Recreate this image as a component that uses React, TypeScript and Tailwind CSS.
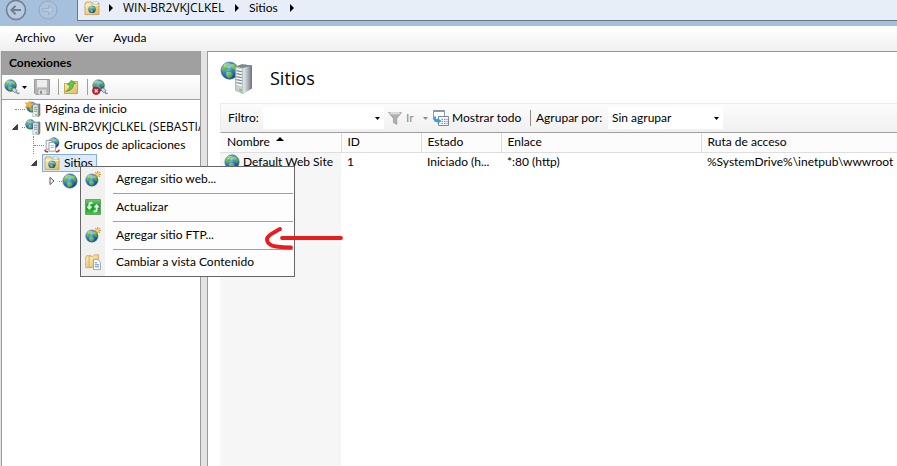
import React from "react";

type IconProps = { className?: string };

function Gradients() {
  return (
    <svg className="absolute h-0 w-0" aria-hidden="true">
      <defs>
        <radialGradient id="sea" cx="0.35" cy="0.3" r="0.8">
          <stop offset="0" stopColor="#a8d4f6" />
          <stop offset="0.4" stopColor="#3f86d6" />
          <stop offset="1" stopColor="#0c2f86" />
        </radialGradient>
        <linearGradient id="land" x1="0" y1="0" x2="1" y2="1">
          <stop offset="0" stopColor="#a5e36a" />
          <stop offset="1" stopColor="#1f8a2c" />
        </linearGradient>
        <linearGradient id="steel" x1="0" y1="0" x2="1" y2="0">
          <stop offset="0" stopColor="#e9eef0" />
          <stop offset="0.45" stopColor="#b4bdc2" />
          <stop offset="1" stopColor="#6b7378" />
        </linearGradient>
        <linearGradient id="manila" x1="0" y1="0" x2="1" y2="1">
          <stop offset="0" stopColor="#fdf0bd" />
          <stop offset="1" stopColor="#e4b95e" />
        </linearGradient>
        <linearGradient id="leaf" x1="0" y1="0" x2="0" y2="1">
          <stop offset="0" stopColor="#6fce6d" />
          <stop offset="0.5" stopColor="#0e9a20" />
          <stop offset="1" stopColor="#3fd03c" />
        </linearGradient>
      </defs>
    </svg>
  );
}

function GlobeShape() {
  return (
    <g>
      <circle cx="8" cy="8" r="7.2" fill="url(#sea)" stroke="#5573a8" strokeWidth="0.6" />
      <path d="M1.6 5.6 4 2.6 7.6 1.4 8.6 3 7 4.6 6.8 6.6 4.4 7.2 4.6 9 2 8.6Z" fill="url(#land)" />
      <path d="M9.6 2.6 12.6 3 14.6 6.4 14.4 9.6 12.2 9 11.6 6.8 9.6 6Z" fill="url(#land)" />
      <path d="M5.4 9.4 8.6 9 10.8 11 9.6 13.6 7.2 14.6 5.2 12.4Z" fill="url(#land)" />
      <ellipse cx="6.4" cy="3.8" rx="3.6" ry="2" fill="#fff" opacity="0.3" />
    </g>
  );
}

function Globe({ className = "size-4 shrink-0" }: IconProps) {
  return (
    <svg viewBox="0 0 16 16" className={className} aria-hidden="true">
      <GlobeShape />
    </svg>
  );
}

function GlobeNew() {
  return (
    <svg viewBox="0 0 16 16" className="size-4 shrink-0" aria-hidden="true">
      <g transform="translate(0 2.2) scale(0.86)">
        <GlobeShape />
      </g>
      <path d="M12.6 0v7M9.1 3.5h7M10.2 1.1l4.8 4.8M15 1.1l-4.8 4.8" stroke="#ee9a26" strokeWidth="1.1" />
      <circle cx="12.6" cy="3.5" r="1.3" fill="#ffe08a" />
    </svg>
  );
}

function GlobePlug() {
  return (
    <svg viewBox="0 0 16 16" className="size-4 shrink-0" aria-hidden="true">
      <g transform="scale(0.82)">
        <GlobeShape />
      </g>
      <path d="M7.8 10.8 10 8.6l3.2 3-2.4 2.2Z" fill="#cfd9e2" stroke="#63717f" strokeWidth="0.8" />
      <path d="m12.2 12.8 1.4 1.8 2-.4" stroke="#7d8994" strokeWidth="1.2" fill="none" />
    </svg>
  );
}

function GlobeRemove() {
  return (
    <svg viewBox="0 0 16 16" className="size-4 shrink-0" aria-hidden="true">
      <g transform="scale(0.82)">
        <GlobeShape />
      </g>
      <path d="M8.8 10.8 11 8.6l3.2 3-2.4 2.2Z" fill="#cfd9e2" stroke="#63717f" strokeWidth="0.8" />
      <path d="m12.8 12.8 1.2 1.8 1.8-.4" stroke="#7d8994" strokeWidth="1.2" fill="none" />
      <circle cx="4.2" cy="11.8" r="3.8" fill="#cf1f25" stroke="#8d1216" strokeWidth="0.6" />
      <path d="m2.7 10.3 3 3M5.7 10.3l-3 3" stroke="#fff" strokeWidth="1.2" />
    </svg>
  );
}

function Tower() {
  return (
    <g>
      <path d="M8 4.4 10.4 3H15v11.4L12.8 16H8Z" fill="url(#steel)" stroke="#727b80" strokeWidth="0.6" />
      <path d="M8.2 4.5h4.4V15.7H8.2Z" fill="#e7ecee" />
      <path d="M9 6.3h3M9 8.3h3M9 10.3h3" stroke="#75818a" strokeWidth="0.8" />
      <path d="M10.2 13.2h1.8v1.2h-1.8Z" fill="#52c234" />
    </g>
  );
}

function ServerIcon() {
  return (
    <svg viewBox="0 0 16 16" className="size-4 shrink-0" aria-hidden="true">
      <g transform="scale(0.68)">
        <GlobeShape />
      </g>
      <Tower />
    </svg>
  );
}

function StartIcon() {
  return (
    <svg viewBox="0 0 16 16" className="size-4 shrink-0" aria-hidden="true">
      <g transform="translate(1 0.4) scale(0.72)">
        <GlobeShape />
      </g>
      <Tower />
      <path d="m0 1.4 3 .6L4.6 0l1 2.4L8.4 3 6 4.8 5.6 7.6 3.4 5.8.4 6.4 1.8 3.8Z" fill="#f7b52e" stroke="#dd8a14" strokeWidth="0.4" />
    </svg>
  );
}

function BigServer() {
  return (
    <svg viewBox="0 0 34 34" className="size-[34px]" aria-hidden="true">
      <g transform="scale(1.2)">
        <GlobeShape />
      </g>
      <path d="M15.5 5.5 22 3.2l10 1.4v22.6l-8.8 5.2-7.7-3.2Z" fill="url(#steel)" />
      <path d="m15.5 5.5 7.7 1.3v25.6l-7.7-3.2Z" fill="#c9d1d5" stroke="#7d868b" strokeWidth="0.5" />
      <path d="M23.2 6.8 32 4.6v22.6l-8.8 5.2Z" fill="url(#steel)" />
      <path d="m15.5 5.5 6.5-2.3 10 1.4-8.8 2.2Z" fill="#7b858a" />
      <path d="m16.5 8.2 5.6 1M16.5 11.2l5.6 1M16.5 14.2l5.6 1M16.5 17.2l5.6 1M16.5 20.2l5.6 1M16.5 23.2l5.6 1.2" stroke="#fff" strokeWidth="1.3" />
      <path d="m16.5 9.7 5.6 1M16.5 12.7l5.6 1M16.5 15.7l5.6 1M16.5 18.7l5.6 1M16.5 21.7l5.6 1" stroke="#6c767d" strokeWidth="0.8" />
      <path d="m19.4 27.4 2.4.8v2.2l-2.4-.8Z" fill="#79d03c" />
    </svg>
  );
}

function SiteFolder() {
  return (
    <svg viewBox="0 0 16 16" className="size-4 shrink-0" aria-hidden="true">
      <path d="M1 3.4h1V2h5l1 1.4h7v11.2H1Z" fill="url(#manila)" stroke="#c79a45" strokeWidth="0.8" />
      <path d="M9 2h5v2.2H9Z" fill="#fff" stroke="#8fb3d1" strokeWidth="0.6" />
      <path d="M1.4 5.4h13.2" stroke="#fff6d5" strokeWidth="0.8" />
      <g transform="translate(4 5.4) scale(0.5)">
        <GlobeShape />
      </g>
    </svg>
  );
}

function AppPools() {
  return (
    <svg viewBox="0 0 16 16" className="size-4 shrink-0" aria-hidden="true">
      <g transform="translate(3.8 0) scale(0.74)">
        <GlobeShape />
      </g>
      <path d="M2.2 3.4h6v8.8h-6Z" fill="#f6f9fb" stroke="#7e8c98" strokeWidth="0.8" />
      <path d="M5 5.4h4.4l2 2v6.8H5Z" fill="#fff" stroke="#7e8c98" strokeWidth="0.8" />
      <path d="M6.6 8.6h3.2M6.6 10.4h3.2" stroke="#8fa3b3" strokeWidth="0.8" />
      <path d="M.8 12.6q.4 2.2 3.4 2.2M15.2 12.6q-.4 2.200-3.400 2.200" stroke="#c9342d" strokeWidth="1.6" fill="none" />
    </svg>
  );
}

function SaveIcon() {
  return (
    <svg viewBox="0 0 16 16" className="size-4 shrink-0" aria-hidden="true">
      <path d="M.5.5h15v15H2L.5 14Z" fill="#b4b4b4" stroke="#9a9a9a" />
      <path d="M3 1h10v7.4H3Z" fill="#ededed" />
      <path d="M4.4 10.6h8v5h-8Z" fill="#dcdcdc" />
      <path d="M6 11.8h2v3H6Z" fill="#8c8c8c" />
    </svg>
  );
}

function UpFolder() {
  return (
    <svg viewBox="0 0 16 16" className="size-4 shrink-0" aria-hidden="true">
      <path d="M1.5 4.5h7l1.4-2h4.6v12h-13Z" fill="url(#manila)" stroke="#c79a45" strokeWidth="0.9" />
      <path d="M2.6 12.4C6 10.8 6.8 8 6.6 5.8H4.4L8.4 1.2l4.4 3.4-2.2.6C10.4 9 8 12.2 2.6 12.4Z" fill="#63c540" stroke="#3b8f27" strokeWidth="0.6" />
    </svg>
  );
}

function RefreshIcon() {
  return (
    <svg viewBox="0 0 16 16" className="size-4 shrink-0" aria-hidden="true">
      <path d="M.5.5h15v15H.5Z" fill="url(#leaf)" stroke="#6fa06e" />
      <path d="M7.4 3.8H5.6Q4.4 3.8 4.4 5v3" stroke="#fff" strokeWidth="1.8" fill="none" />
      <path d="M1.4 7.4h6L4.4 11Z" fill="#fff" />
      <path d="M8.6 12.4h1.8q1.2 0 1.2-1.2v-3" stroke="#fff" strokeWidth="1.8" fill="none" />
      <path d="M8.6 8.6h6L11.6 5Z" fill="#fff" />
    </svg>
  );
}

function ContentIcon() {
  return (
    <svg viewBox="0 0 16 16" className="size-4 shrink-0" aria-hidden="true">
      <path d="M.6 3h1V1.6h4L6.6 3v10.6h-6Z" fill="url(#manila)" stroke="#c4a059" strokeWidth="0.7" />
      <path d="M4.2 4V2.2h4L9.4.8h4.2v11l-9.4 2Z" fill="url(#manila)" stroke="#c4a059" strokeWidth="0.7" />
      <path d="M8.4 5.6h4.4l2.6 2.6v7.4h-7Z" fill="#fff" stroke="#7b94ab" strokeWidth="0.8" />
      <path d="M9.8 8.8h2.4M9.8 10.8H14M9.8 12.8H14" stroke="#4f7fb5" strokeWidth="0.9" />
    </svg>
  );
}

function FunnelIcon() {
  return (
    <svg viewBox="0 0 14 14" className="size-3.5 shrink-0" aria-hidden="true">
      <path d="M.5 1.6h13L8.8 7.4v6l-3.4-1.8V7.4Z" fill="#b0b0b0" stroke="#989898" strokeWidth="0.7" />
      <ellipse cx="7" cy="2.2" rx="5.4" ry="1.2" fill="#dcdcdc" />
    </svg>
  );
}

function ShowAllIcon() {
  return (
    <svg viewBox="0 0 16 16" className="size-4 shrink-0" aria-hidden="true">
      <path d="M.5.5h11v9H.5Z" fill="#fff" stroke="#8b98a3" />
      <path d="M.5 1.2h11" stroke="#8b98a3" strokeWidth="1.6" />
      <path d="M5.5 6.5h10v9h-10Z" fill="#f4f8fb" stroke="#7b8994" />
      <path d="M8.6 9.4h6M8.600 11.400h6M8.600 13.400h6" stroke="#6e8ba3" strokeDasharray="1.4 1" />
      <path d="M1 6.6v3.6q0 1.8 1.8 1.8h1.8V14l4-3-4-3v1.8H3V6.6Z" fill="#3e9bdc" />
    </svg>
  );
}

function Down({ className = "text-black" }: IconProps) {
  return (
    <svg viewBox="0 0 5 3" className={`h-[3px] w-[5px] shrink-0 ${className}`} aria-hidden="true">
      <path d="M0 0h5L2.5 3Z" fill="currentColor" />
    </svg>
  );
}

function Crumb() {
  return (
    <svg viewBox="0 0 4 8" className="h-2 w-1 shrink-0" aria-hidden="true">
      <path d="M0 0 4 4 0 8Z" fill="#000" />
    </svg>
  );
}

function Open() {
  return (
    <svg viewBox="0 0 6 6" className="size-1.5 shrink-0" aria-label="Contraer">
      <path d="M5.5.5v5h-5Z" fill="#444" stroke="#222" strokeWidth="0.8" />
    </svg>
  );
}

function Closed() {
  return (
    <svg viewBox="0 0 6 10" className="h-2.5 w-1.5 shrink-0" aria-label="Expandir">
      <path d="M1 1.4 5 5 1 8.6Z" fill="#fff" stroke="#555" />
    </svg>
  );
}

function Branch({ className = "w-1" }: IconProps) {
  return <span className={`h-0 shrink-0 border-t border-dotted border-[#888] ${className}`} />;
}

function TopBar() {
  return (
    <header className="flex h-[26px] shrink-0 items-start bg-[#a6bfdd]">
      <div className="flex h-5 w-[77px] shrink-0 items-center gap-2.5 pl-[5px]">
        <button aria-label="Atrás" className="text-[#737f8e]">
          <svg viewBox="0 0 22 22" className="size-[22px]">
            <circle cx="11" cy="11" r="9.5" fill="#b8cae0" stroke="currentColor" strokeWidth="1.6" />
            <path d="M16 11H6.6M10.6 6.8 6.4 11l4.2 4.2" fill="none" stroke="currentColor" strokeWidth="2" />
          </svg>
        </button>
        <button aria-label="Adelante" className="text-[#92a7c2]">
          <svg viewBox="0 0 22 22" className="size-[22px]">
            <circle cx="11" cy="11" r="9" fill="#adc4df" stroke="currentColor" />
            <path d="M5.6 9.6h6V6.4l5 4.6-5 4.6v-3.2h-6Z" fill="#b9cce3" stroke="currentColor" strokeWidth="0.8" />
          </svg>
        </button>
      </div>
      <nav aria-label="Ruta" className="flex h-[21px] flex-1 items-center border-b border-l border-[#6c7886] bg-[#e7eef7] pb-1 pl-1.5">
        <SiteFolder />
        <span className="w-[9px]" />
        <Crumb />
        <button className="ml-[10px] w-28 text-left font-['Open_Sans','Noto_Sans',sans-serif]">WIN-BR2VKJCLKEL</button>
        <Crumb />
        <button className="ml-[10px] w-[41px] text-left">Sitios</button>
        <Crumb />
      </nav>
    </header>
  );
}

function Connections() {
  return (
    <aside className="flex w-[200px] shrink-0 flex-col border-x border-[#999] bg-white">
      <h2 className="flex h-6 shrink-0 items-center bg-[#a0a0a0] pl-[7px] font-bold">Conexiones</h2>
      <div role="toolbar" aria-label="Conexiones" className="flex h-[25px] shrink-0 items-center border-b border-[#a0a0a0] bg-gradient-to-b from-white to-[#f0f0f0] pl-0.5">
        <button aria-label="Conectar" className="flex items-center gap-0.5">
          <GlobePlug />
          <Down />
        </button>
        <button aria-label="Guardar" className="ml-[7px]"><SaveIcon /></button>
        <span className="ml-2 h-4 w-px bg-[#a0a0a0]" />
        <button aria-label="Subir" className="ml-1"><UpFolder /></button>
        <span className="ml-2 h-4 w-px bg-[#a0a0a0]" />
        <button aria-label="Quitar conexión" className="ml-1"><GlobeRemove /></button>
      </div>
      <ul role="tree" className="overflow-hidden pl-px leading-[18px] whitespace-nowrap *:flex *:h-[18px] *:items-center">
        <li role="treeitem" className="pl-3">
          <Branch className="w-2.5" />
          <StartIcon />
          <span className="ml-1">Página de inicio</span>
        </li>
        <li role="treeitem" aria-expanded="true" className="pl-[9px]">
          <Open />
          <span className="w-1 shrink-0" />
          <Branch className="w-[3px]" />
          <ServerIcon />
          <span className="ml-1 font-['Open_Sans','Noto_Sans',sans-serif]">WIN-BR2VKJCLKEL (SEBASTIA</span>
        </li>
        <li role="treeitem" className="pl-[30px]">
          <span className="h-full w-0 shrink-0 border-l border-dotted border-[#888]" />
          <Branch className="w-2.5" />
          <AppPools />
          <span className="ml-1">Grupos de aplicaciones</span>
        </li>
        <li role="treeitem" aria-expanded="true" aria-selected="true" className="pl-7">
          <Open />
          <span className="w-[5px] shrink-0" />
          <span className="flex h-[18px] items-center border border-[#84acdd] bg-[#dceafc] pr-[3px] pl-px">
            <SiteFolder />
            <span className="ml-1">Sitios</span>
          </span>
        </li>
        <li role="treeitem" aria-expanded="false" aria-label="Default Web Site" className="pl-[46px]">
          <Closed />
          <span className="w-1 shrink-0" />
          <Branch className="w-[3px]" />
          <Globe />
        </li>
      </ul>
    </aside>
  );
}

function FilterBar() {
  return (
    <div role="toolbar" aria-label="Filtro" className="flex h-[30px] shrink-0 items-center border-t border-l border-b border-t-[#ececec] border-b-[#a0a0a0] border-l-[#ececec] bg-gradient-to-b from-[#fcfcfc] to-[#f0f0f0] pl-[7px] whitespace-nowrap">
      <label htmlFor="filter" className="w-[35px]">Filtro:</label>
      <div className="flex h-[22px] w-[121px] items-center bg-white pr-1">
        <input id="filter" className="w-full min-w-0 bg-transparent outline-none" />
        <button aria-label="Mostrar filtros"><Down /></button>
      </div>
      <button disabled className="ml-1 flex w-[35px] items-center gap-1 text-[#8d8d8d]">
        <FunnelIcon />
        Ir
      </button>
      <button disabled aria-label="Opciones de búsqueda"><Down className="text-[#8d8d8d]" /></button>
      <button className="ml-[5px] flex w-[97px] items-center gap-[3px]">
        <ShowAllIcon />
        Mostrar todo
      </button>
      <span className="h-4 w-px bg-[#8d8d8d]" />
      <label htmlFor="group" className="ml-[5px] w-[72px]">Agrupar por:</label>
      <span className="flex h-[22px] w-[115px] items-center bg-white pr-1 pl-1">
        <select id="group" className="w-full appearance-none bg-transparent outline-none">
          <option>Sin agrupar</option>
        </select>
        <Down />
      </span>
    </div>
  );
}

const columns = [
  { name: "Nombre", width: "w-[121px]" },
  { name: "ID", width: "w-20" },
  { name: "Estado", width: "w-20" },
  { name: "Enlace", width: "w-[200px]" },
  { name: "Ruta de acceso", width: "" },
];

function Sites() {
  return (
    <main className="flex min-w-0 flex-1 flex-col border-t border-l border-[#999] bg-white pl-3">
      <div className="flex h-[51px] shrink-0 items-center gap-4">
        <BigServer />
        <h1 className="font-['Open_Sans','Noto_Sans',sans-serif] text-lg">Sitios</h1>
      </div>
      <FilterBar />
      <table className="w-full flex-1 table-fixed border-collapse text-left whitespace-nowrap">
        <thead>
          <tr className="h-[19px]">
            {columns.map((column, index) => (
              <th
                key={column.name}
                scope="col"
                aria-sort={index === 0 ? "ascending" : undefined}
                className={`border-b border-[#dedede] bg-[#fcfcfc] py-0 font-normal leading-[18px] ${column.width} ${index < 4 ? "border-r" : ""} ${index === 0 ? "pl-[7px]" : "pl-1.5"}`}
              >
                <span className="flex items-start">
                  {column.name}
                  {index === 0 && (
                    <svg viewBox="0 0 8 4" className="mt-1 ml-1.5 h-1 w-2" aria-hidden="true">
                      <path d="M0 4 4 0 8 4Z" fill="#000" />
                    </svg>
                  )}
                </span>
              </th>
            ))}
          </tr>
        </thead>
        <tbody>
          <tr className="h-5">
            <td className="bg-[#f6f6f6] p-0 pl-1">
              <span className="flex items-center gap-[3px]">
                <Globe />
                Default Web Site
              </span>
            </td>
            <td className="p-0 pl-1.5">1</td>
            <td className="p-0 pl-1.5">Iniciado (h...</td>
            <td className="p-0 pl-1.5">*:80 (http)</td>
            <td className="p-0 pl-1.5">%SystemDrive%\inetpub\wwwroot</td>
          </tr>
          <tr aria-hidden="true">
            <td className="h-[calc(100vh-172px)] bg-[#f6f6f6] p-0" />
            <td colSpan={4} />
          </tr>
        </tbody>
      </table>
    </main>
  );
}

const actions = [
  { label: "Agregar sitio web...", icon: <GlobeNew />, height: "h-[26px]" },
  { label: "Actualizar", icon: <RefreshIcon />, height: "h-[27px]" },
  { label: "Agregar sitio FTP...", icon: <GlobeNew />, height: "h-[27px]" },
  { label: "Cambiar a vista Contenido", icon: <ContentIcon />, height: "h-[26px]" },
];

function ContextMenu() {
  return (
    <div role="menu" className="absolute top-[166px] left-20 w-[215px] border border-[#666] bg-[#fdfdfd] bg-gradient-to-r from-[#f1f1f1] from-[24px] to-[#fdfdfd] to-[24px]">
      {actions.map((action, index) => (
        <React.Fragment key={action.label}>
          {index > 0 && <div role="separator" className="mr-px ml-8 h-px bg-[#a0a0a0]" />}
          <button role="menuitem" className={`flex w-full items-center pb-0.5 pl-1 text-left ${action.height}`}>
            {action.icon}
            <span className="ml-[15px]">{action.label}</span>
          </button>
        </React.Fragment>
      ))}
    </div>
  );
}

function RedArrow() {
  return (
    <svg viewBox="0 0 80 24" className="pointer-events-none absolute top-[226px] left-[264px] h-6 w-20" aria-hidden="true">
      <path d="M18 12h59M16 3C11 6 4 9 3 12.5C2.5 17 7 20 12 20.5C17 21.2 22 21.4 27 21.5" fill="none" stroke="#e81c1c" strokeWidth="3.8" strokeLinecap="round" strokeLinejoin="round" />
    </svg>
  );
}

export default function App() {
  return (
    <div className="relative flex h-screen flex-col overflow-hidden bg-[#e3e3e3] font-['Lato','Open_Sans',sans-serif] text-[12px] leading-4 text-black">
      <Gradients />
      <TopBar />
      <nav aria-label="Menú" className="flex h-[25px] shrink-0 items-center gap-5 bg-gradient-to-b from-white to-[#f0f0f0] pb-px pl-[15px]">
        <button>Archivo</button>
        <button>Ver</button>
        <button>Ayuda</button>
      </nav>
      <div className="flex min-h-0 flex-1 gap-1.5 pl-px">
        <Connections />
        <Sites />
      </div>
      <ContextMenu />
      <RedArrow />
    </div>
  );
}
